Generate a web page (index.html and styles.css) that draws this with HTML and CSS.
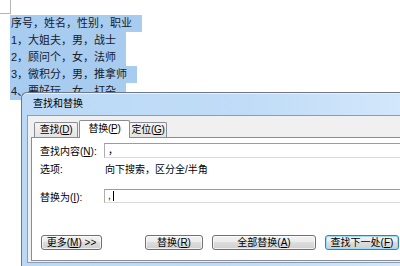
FILE: index.html
```html
<!DOCTYPE html>
<html lang="zh-CN">
<head>
  <meta charset="UTF-8" />
  <title>查找和替换</title>
  <link rel="stylesheet" href="styles.css">
</head>
<body>

<!-- Документ: угол страницы и выделенный текст -->
<div class="corner"></div>
<div class="doc">
  <p>序号，姓名，性别，职业</p>
  <p>1，大姐夫，男，战士</p>
  <p>2，顾问个，女，法师</p>
  <p>3，微积分，男，推拿师</p>
  <p>4、要好玩，女，打杂</p>
</div>

<!-- Окно "查找和替换" поверх документа -->
<div class="dialog">
  <div class="titlebar">查找和替换</div>
  <div class="client">
    <div class="tabs">
      <div class="tab tab-find">查找(<u>D</u>)</div>
      <div class="tab tab-replace active">替换(<u>P</u>)</div>
      <div class="tab tab-goto">定位(<u>G</u>)</div>
    </div>
    <div class="panel">
      <div class="row row-find">
        <label>查找内容(<u>N</u>):</label>
        <div class="field">，</div>
      </div>
      <div class="row row-options">
        <label>选项:</label>
        <span class="value">向下搜索，区分全/半角</span>
      </div>
      <div class="row row-replace">
        <label>替换为(<u>I</u>):</label>
        <div class="field">,<span class="caret"></span></div>
      </div>
      <div class="buttons">
        <button class="btn btn-more">更多(<u>M</u>) &gt;&gt;</button>
        <button class="btn btn-replace">替换(<u>R</u>)</button>
        <button class="btn btn-all">全部替换(<u>A</u>)</button>
        <button class="btn btn-next default">查找下一处(<u>F</u>)</button>
      </div>
    </div>
  </div>
</div>

</body>
</html>
```

FILE: styles.css
```css
* {
  box-sizing: border-box;
  margin: 0;
  padding: 0;
}

body {
  width: 400px;
  height: 266px;
  overflow: hidden;
  position: relative;
  background: #fff;
  font-family: 'Liberation Sans', 'Noto Sans CJK SC', sans-serif;
}

/* угол страницы */
.corner {
  width: 11px;
  height: 14px;
  border-right: 1px solid #b4b4b4;
  border-bottom: 1px solid #b4b4b4;
}

.doc {
  margin: 1px 0 0 10px;
  font-size: 11px;
  line-height: 17px;
  color: #16202c;
}

.doc p {
  width: fit-content;
  background: #a8ccf0;
  padding: 0 10px 0 1px;
}

/* окно (правый край уходит за кадр) */
.dialog {
  position: absolute;
  left: 21px;
  top: 92px;
  width: 379px;
  height: 174px;
  border: 1px solid #6f7782;
  border-right: none;
  border-bottom: none;
  border-radius: 6px 0 0 0;
  background: linear-gradient(90deg, #bbd9f6, #c0dcf7 60%, #d3e7fb);
  padding: 0 0 0 5px;
  font-size: 10px;
  color: #000;
  box-shadow: inset 0 1px 0 #e6f1fc;
}

.titlebar {
  height: 22px;
  line-height: 22px;
  padding-left: 6px;
}

.client {
  background: #f0f0f0;
  border: 1px solid #8d9db0;
  border-right: none;
  padding: 5px 0 1px 3px;
  height: 148px;
}

.tabs {
  display: flex;
  align-items: flex-end;
  padding-left: 3px;
  height: 16px;
}

.tab {
  height: 15px;
  line-height: 14px;
  text-align: center;
  border: 1px solid #898c95;
  border-bottom: none;
  border-radius: 2px 2px 0 0;
  background: linear-gradient(#f4f4f4, #e4e4e4);
  white-space: nowrap;
  letter-spacing: -0.3px;
  overflow: hidden;
}

.tab-find { width: 44px; }
.tab-goto { width: 38px; margin-left: -1px; }

.tab.active {
  width: 51px;
  height: 18px;
  line-height: 16px;
  margin-left: 1px;
  margin-bottom: -1px;
  background: #fff;
  position: relative;
  z-index: 1;
}

.panel {
  border: 1px solid #898c95;
  border-right: none;
  background: #fff;
  height: 124px;
  padding-left: 8px;
}

.row {
  display: flex;
  align-items: center;
}

.row label {
  width: 64px;
  flex-shrink: 0;
}

.row-find {
  margin-top: 5px;
  height: 15px;
}

.row-options {
  margin-top: 3px;
  height: 14px;
}

.row-options .value {
  padding-left: 1px;
}

.row-replace {
  margin-top: 14px;
  height: 14px;
}

.field {
  flex: 1;
  height: 100%;
  border: 1px solid #abadb3;
  border-top-color: #9a9ca3;
  border-bottom-color: #d8dce2;
  border-right: none;
  background: #fff;
  padding-left: 3px;
  line-height: 12px;
  display: flex;
  align-items: center;
}

.caret {
  display: inline-block;
  width: 1px;
  height: 10px;
  background: #000;
  margin-left: 2px;
}

/* кнопки */
.buttons {
  display: flex;
  margin-top: 32px;
  padding-left: 1px;
}

.btn {
  height: 15px;
  font-family: inherit;
  font-size: 10px;
  line-height: 13px;
  color: #000;
  border: 1px solid #707070;
  border-radius: 3px;
  background: linear-gradient(#f2f2f2 0%, #ebebeb 50%, #dddddd 50%, #cfcfcf 100%);
  box-shadow: inset 0 0 0 1px rgba(255, 255, 255, 0.7);
  white-space: nowrap;
}

.btn-more { width: 61px; }
.btn-replace { width: 58px; margin-left: 43px; }
.btn-all { width: 104px; margin-left: 9px; }
.btn-next { width: 74px; margin-left: 9px; }

.btn.default {
  border-color: #3c7fb1;
  box-shadow: inset 0 0 0 1px #9fdcf7;
}
```
